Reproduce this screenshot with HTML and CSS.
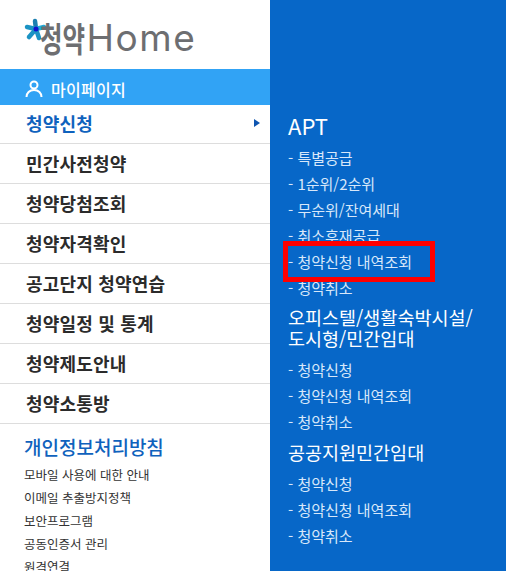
FILE: index.html
```html
<!DOCTYPE html>
<html lang="ko">
<head>
    <meta charset="UTF-8">
    <title>청약Home</title>
    <link rel="stylesheet" href="styles.css">
</head>
<body>
    <div class="layout">
        <div class="side">
            <div class="logo">
                <svg class="logo-star" width="24" height="24" viewBox="0 0 24 24">
                    <g stroke-width="4.5" stroke-linecap="round">
                        <line x1="12" y1="11" x2="11" y2="3" stroke="#1b7fb0"/>
                        <line x1="12" y1="11" x2="20" y2="9" stroke="#22a8d8"/>
                        <line x1="12" y1="11" x2="3" y2="9" stroke="#1b93c4"/>
                        <line x1="12" y1="11" x2="5" y2="19" stroke="#1b93c4"/>
                        <line x1="12" y1="11" x2="15" y2="20" stroke="#1b93c4"/>
                    </g>
                    <circle cx="12" cy="11" r="2.5" fill="#1010d0"/>
                </svg>
                <span class="logo-kr">청약</span><span class="logo-en">Home</span>
            </div>
            <div class="mypage">
                <svg width="18" height="18" viewBox="0 0 18 18" fill="none" stroke="#fff" stroke-width="2">
                    <circle cx="9" cy="5" r="3.500"/>
                    <path d="M1.500 17c0-4 3-7 7.500-7s7.500 3 7.500 7"/>
                </svg>
                <span>마이페이지</span>
            </div>
            <ul class="menu">
                <li class="active">청약신청<span class="arrow"></span></li>
                <li>민간사전청약</li>
                <li>청약당첨조회</li>
                <li>청약자격확인</li>
                <li>공고단지 청약연습</li>
                <li>청약일정 및 통계</li>
                <li>청약제도안내</li>
                <li>청약소통방</li>
            </ul>
            <div class="policy">
                <h3>개인정보처리방침</h3>
                <a>모바일 사용에 대한 안내</a>
                <a>이메일 추출방지정책</a>
                <a>보안프로그램</a>
                <a>공동인증서 관리</a>
                <a>원격연결</a>
            </div>
        </div>
        <div class="panel">
            <h2 class="latin">APT</h2>
            <ul>
                <li>- 특별공급</li>
                <li>- 1순위/2순위</li>
                <li>- 무순위/잔여세대</li>
                <li>- 취소후재공급</li>
                <li class="marked">- 청약신청 내역조회</li>
                <li>- 청약취소</li>
            </ul>
            <h2>오피스텔/생활숙박시설/<br>도시형/민간임대</h2>
            <ul>
                <li>- 청약신청</li>
                <li>- 청약신청 내역조회</li>
                <li>- 청약취소</li>
            </ul>
            <h2>공공지원민간임대</h2>
            <ul>
                <li>- 청약신청</li>
                <li>- 청약신청 내역조회</li>
                <li>- 청약취소</li>
            </ul>
        </div>
    </div>
</body>
</html>
```

FILE: styles.css
```css
html, body {
    margin: 0;
    height: 571px;
    overflow: hidden;
}
body {
    font-family: "Noto Sans CJK KR", "Noto Sans", sans-serif;
    background: #fff;
}
ul {
    list-style: none;
    margin: 0;
    padding: 0;
}
.layout {
    display: flex;
    height: 571px;
}
.side {
    width: 270px;
    overflow: hidden;
}
.logo {
    height: 69px;
    box-sizing: border-box;
    display: flex;
    align-items: center;
    padding: 6px 0 0 40px;
    color: #6d6e71;
    position: relative;
}
.logo-star {
    position: absolute;
    left: 24px;
    top: 18px;
}
.logo-kr {
    display: inline-block;
    font-size: 34px;
    font-weight: 700;
    transform: scaleX(0.72);
    transform-origin: left center;
    margin-right: -16px;
}
.logo-en {
    font-family: "Inter", sans-serif;
    font-size: 37px;
    font-weight: 400;
    letter-spacing: 1.5px;
}
.mypage {
    height: 36px;
    background: #31a3f5;
    color: #fff;
    display: flex;
    align-items: center;
    gap: 8px;
    padding: 3px 0 0 25px;
    box-sizing: border-box;
    font-size: 16px;
    font-weight: 500;
    letter-spacing: 0.3px;
}
.menu li {
    height: 40px;
    box-sizing: border-box;
    border-bottom: 1px solid #ddd;
    padding: 0 0 1px 26px;
    display: flex;
    align-items: center;
    font-size: 18px;
    font-weight: 700;
    letter-spacing: 0.2px;
    color: #2b2b2b;
}
.menu li.active {
    color: #0f62bd;
    margin-top: -1px;
    justify-content: space-between;
}
.arrow {
    border-left: 6px solid #0f55b0;
    border-top: 4px solid transparent;
    border-bottom: 4px solid transparent;
    margin-right: 10px;
}
.policy {
    padding: 10px 0 0 24px;
}
.policy h3 {
    margin: 0 0 4px;
    font-size: 19px;
    font-weight: 500;
    line-height: 25px;
    color: #0f62bd;
}
.policy a {
    display: block;
    font-size: 12.5px;
    line-height: 23px;
    color: #333;
}
.panel {
    flex: 1;
    background: #0767c8;
    color: #fff;
    padding: 115px 0 0 18px;
    position: relative;
}
.panel h2 {
    margin: 0;
    font-size: 18.5px;
    font-weight: 400;
    line-height: 20.5px;
}
.panel h2.latin {
    font-size: 22px;
}
.panel ul {
    margin: 9px 0 6.5px;
}
.panel li {
    font-size: 15px;
    line-height: 26px;
    color: #d8e8fa;
}
.marked {
    position: relative;
}
.marked::after {
    content: "";
    position: absolute;
    left: -5px;
    top: -8px;
    width: 142px;
    height: 31px;
    border: 5px solid #f00;
}
```
